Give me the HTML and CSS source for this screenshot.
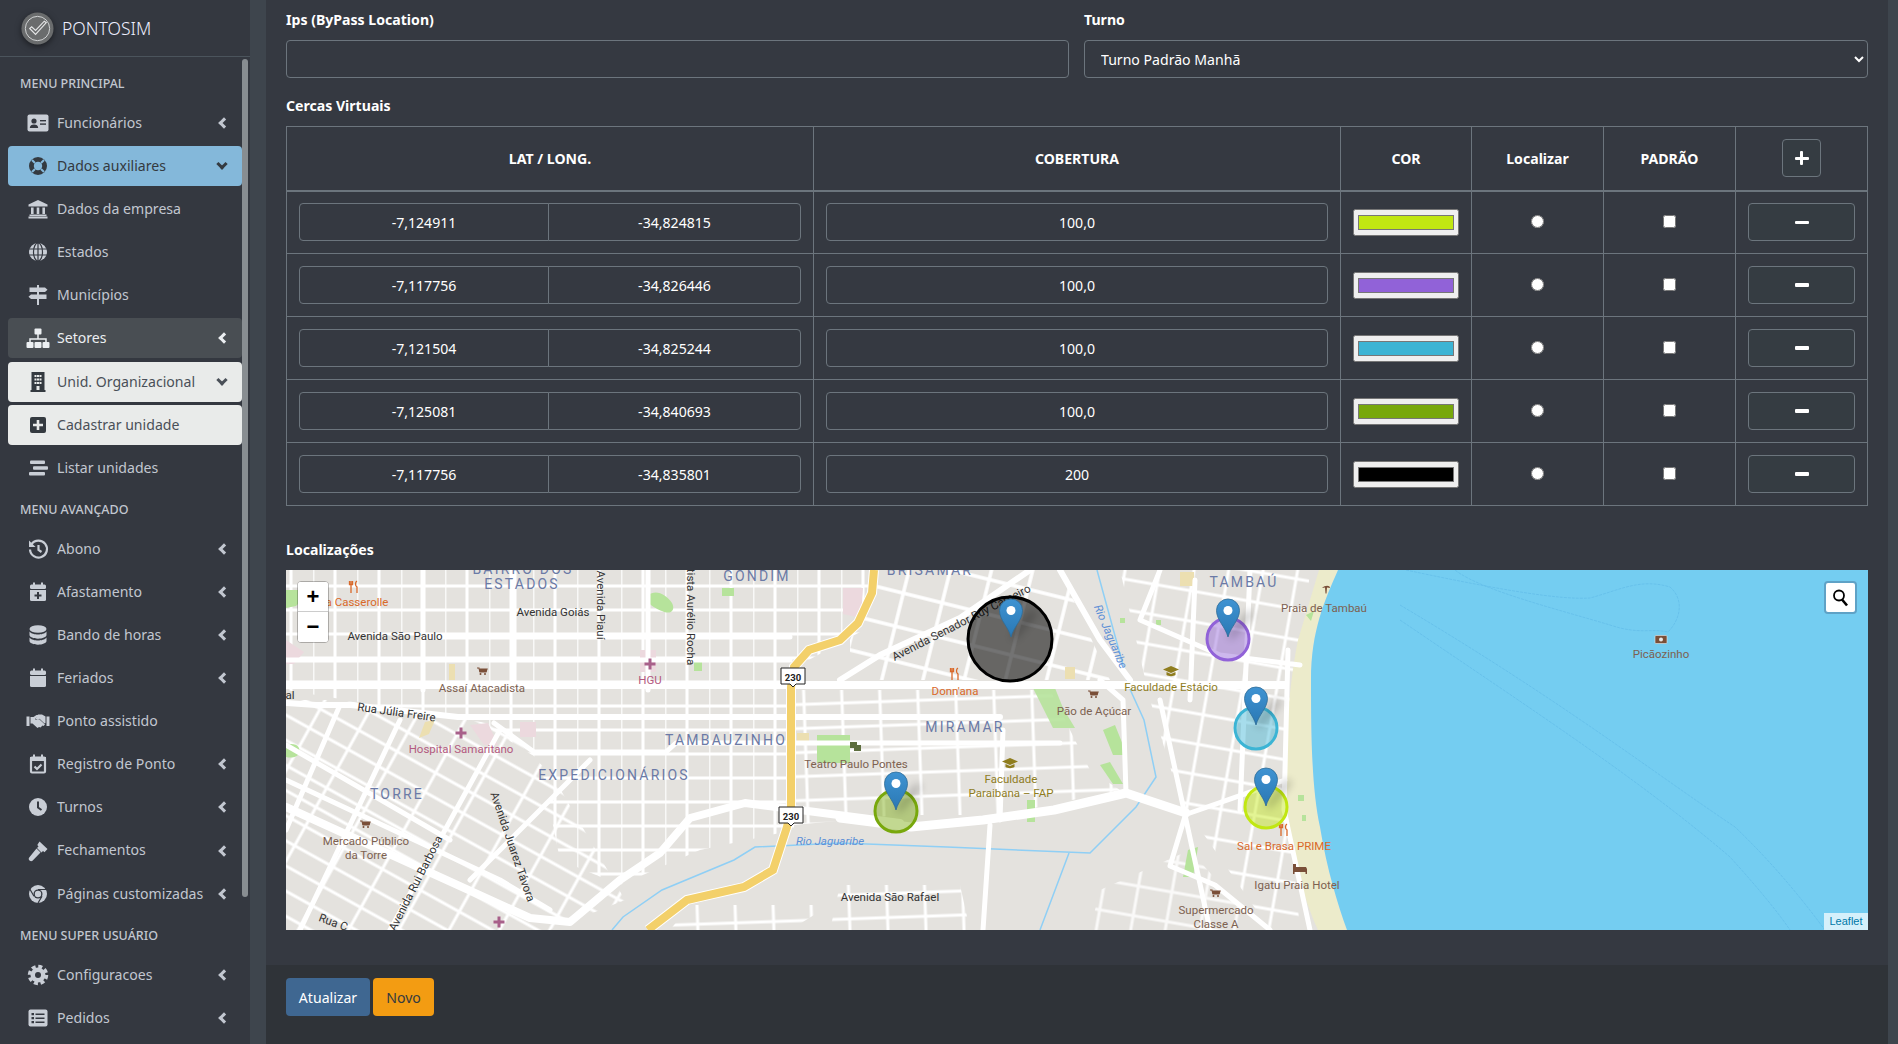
FILE: index.html
```html
<!DOCTYPE html>
<html lang="pt-BR">
<head>
  <meta charset="UTF-8">
  <meta name="viewport" content="width=device-width, initial-scale=1.0">
  <title>PontoSim</title>
  <link rel="stylesheet" href="styles.css">
</head>
<body>
<!-- icon sprite -->
<svg class="sprite" xmlns="http://www.w3.org/2000/svg">
  <symbol id="i-card" viewBox="0 0 24 24"><rect x="1.5" y="3.5" width="21" height="17" rx="2"/><circle class="cut" cx="8" cy="10" r="2.6"/><path class="cut" d="M3.8 17c0-2.5 2-3.6 4.2-3.6s4.2 1.1 4.2 3.6z"/><rect class="cut" x="14" y="9" width="6" height="1.4"/><rect class="cut" x="14" y="12.4" width="6" height="1.4"/></symbol>
  <symbol id="i-ring" viewBox="0 0 24 24"><circle cx="12" cy="12" r="9"/><circle class="cut" cx="12" cy="12" r="4.2"/><path class="cutline" d="M6 6l3 3M18 6l-3 3M6 18l3-3M18 18l-3-3"/></symbol>
  <symbol id="i-bank" viewBox="0 0 24 24"><path d="M12 3l9.500 4.500V9.500H2.500V7.500z"/><rect x="5" y="10.500" width="2.600" height="6.500"/><rect x="10.700" y="10.500" width="2.600" height="6.500"/><rect x="16.400" y="10.500" width="2.600" height="6.500"/><rect x="3.500" y="17.500" width="17" height="1.600"/><rect x="2.500" y="19.500" width="19" height="2"/></symbol>
  <symbol id="i-globe" viewBox="0 0 24 24"><circle cx="12" cy="12" r="9"/><path class="cutline thin" d="M3 9h18M3 15h18M12 3v18"/><ellipse class="cutline thin" cx="12" cy="12" rx="4.500" ry="9"/></symbol>
  <symbol id="i-post" viewBox="0 0 24 24"><rect x="11" y="2" width="2" height="20"/><path d="M3.500 4.500H19l2.500 2.300L19 9H3.500z"/><path d="M20.500 11.500H5L2.500 13.800 5 16h15.500z"/></symbol>
  <symbol id="i-sitemap" viewBox="0 0 24 24"><rect x="8.500" y="2.500" width="7" height="6" rx="1"/><path class="line" d="M12 8v5M4 16v-3h16v3"/><rect x="0.500" y="16" width="7" height="6" rx="1"/><rect x="8.500" y="16" width="7" height="6" rx="1"/><rect x="16.500" y="16" width="7" height="6" rx="1"/></symbol>
  <symbol id="i-building" viewBox="0 0 24 24"><rect x="5.500" y="2" width="13" height="18.500"/><rect x="4.500" y="20" width="15" height="2"/><path class="cut" d="M8.500 5h2v2h-2zM11 5h2v2h-2zM13.500 5h2v2h-2zM8.500 8.500h2v2h-2zM11 8.500h2v2h-2zM13.500 8.500h2v2h-2zM8.500 12h2v2h-2zM11 12h2v2h-2zM13.500 12h2v2h-2zM10.500 16h3v4h-3z"/></symbol>
  <symbol id="i-plus" viewBox="0 0 24 24"><rect x="4" y="4" width="16" height="16" rx="2"/><path class="cut" d="M10.700 7h2.600v3.700H17v2.600h-3.700V17h-2.600v-3.700H7v-2.600h3.700z"/></symbol>
  <symbol id="i-stream" viewBox="0 0 24 24"><rect x="4" y="4.500" width="15" height="3.500" rx="1"/><rect x="7" y="10.200" width="15" height="3.500" rx="1"/><rect x="3" y="16" width="16" height="3.500" rx="1"/></symbol>
  <symbol id="i-history" viewBox="0 0 24 24"><path class="line wide" d="M5.500 7.200A8.500 8.500 0 1 1 4 12.500"/><path d="M3 3.500l6.500 6.500H3z"/><path class="line wide" d="M12.500 8v5l3 2"/></symbol>
  <symbol id="i-calplus" viewBox="0 0 24 24"><rect x="7" y="2.500" width="2" height="4"/><rect x="15" y="2.500" width="2" height="4"/><rect x="4" y="4.500" width="16" height="4.500" rx="1.500"/><path d="M4 10h16v9.500a1.500 1.500 0 0 1-1.500 1.500h-13A1.500 1.500 0 0 1 4 19.500z"/><path class="cut" d="M11 12h2v2.500h2.500v2H13V19h-2v-2.500H8.500v-2H11z"/></symbol>
  <symbol id="i-db" viewBox="0 0 24 24"><ellipse cx="12" cy="6" rx="8.500" ry="3.800"/><path d="M3.500 8.500C5 10.800 9 11.500 12 11.500s7-.7 8.500-3V12c0 2-4 3.700-8.500 3.700S3.500 14 3.500 12z"/><path d="M3.500 14.500C5 16.800 9 17.500 12 17.500s7-.7 8.500-3V18c0 2-4 3.700-8.500 3.700S3.500 20 3.500 18z"/></symbol>
  <symbol id="i-cal" viewBox="0 0 24 24"><rect x="7" y="2.500" width="2" height="4"/><rect x="15" y="2.500" width="2" height="4"/><rect x="4" y="4.500" width="16" height="4.500" rx="1.500"/><path d="M4 10h16v9.500a1.500 1.500 0 0 1-1.500 1.500h-13A1.500 1.500 0 0 1 4 19.500z"/></symbol>
  <symbol id="i-hands" viewBox="0 0 24 24"><rect x="0.500" y="7.500" width="3" height="9.500"/><rect x="20.500" y="7.500" width="3" height="9.500"/><path d="M4.500 8h3l3-2h3l-4.500 4c1 1.500 2.500 1.200 4 0l6 5.500-1.500 1.500-1-.5-2 2-1.500-.5-1.500 1-5-4.500H4.500z"/><path d="M12 5.500h4l3.500 2V14l-1 .5-5-4.800-2 1.300-2-1z"/></symbol>
  <symbol id="i-calcheck" viewBox="0 0 24 24"><rect x="7" y="2.500" width="2" height="4"/><rect x="15" y="2.500" width="2" height="4"/><rect class="line wide" x="5" y="5.500" width="14" height="15" rx="1"/><rect x="4" y="5" width="16" height="4"/><path class="line wide" d="M8.500 14.500l2.500 2.500 4.500-4.500"/></symbol>
  <symbol id="i-clock" viewBox="0 0 24 24"><circle cx="12" cy="12" r="9"/><path class="cutline" d="M12 6.500V12.500l3.500 2.500"/></symbol>
  <symbol id="i-gavel" viewBox="0 0 24 24"><path d="M13.500 2.500l8 7.500-3 3.200-1.500-1.200-1.500 1.500-4.500-4.500 1.500-1.500-1.200-1.500z"/><path d="M10.500 9.500l4 4-8 8.300c-.8.600-2 .6-3-.3s-1-2.300-.3-3z"/></symbol>
  <symbol id="i-chrome" viewBox="0 0 24 24"><circle cx="12" cy="12" r="9"/><circle class="cut" cx="12" cy="12" r="4.500"/><circle cx="12" cy="12" r="3.200"/><path class="cutline thin" d="M12 7.500h8.500M8 14.200L3.800 7M16 14.200L12 21"/></symbol>
  <symbol id="i-cog" viewBox="0 0 24 24"><circle cx="12" cy="12" r="7.500"/><circle class="line gear" cx="12" cy="12" r="8.500"/><circle class="cut" cx="12" cy="12" r="3"/></symbol>
  <symbol id="i-list" viewBox="0 0 24 24"><rect x="2.500" y="3.500" width="19" height="17" rx="2"/><path class="cut" d="M5.500 7h2.500v2.300H5.500zM5.500 11h2.500v2.300H5.500zM5.500 15h2.500v2.300H5.500zM9.500 7.400h9v1.500h-9zM9.500 11.400h9v1.500h-9zM9.500 15.400h9v1.500h-9z"/></symbol>
  <symbol id="pin" viewBox="-14 -41 48 44" overflow="visible"><path d="M0 0C-2.500-10-11.500-17-11.500-26.500A11.500 11.500 0 0 1 11.500-26.500C11.500-17 2.500-10 0 0z" fill="url(#pinFill)" stroke="#2e6c97" stroke-width=".8"/><circle cx="0" cy="-26.500" r="4.500" fill="#fff"/></symbol>
</svg>

<div class="wrapper">
  <aside class="sidebar">
    <div class="brand">
      <svg class="brand-logo" viewBox="0 0 36 36"><circle cx="18" cy="18" r="16.500" fill="#6a6c6d"/><circle cx="18" cy="18" r="12.500" fill="none" stroke="#d3d5d6" stroke-width="1"/><path d="M10 18l6 6 11-12-2-1.500-9 9.500-4-3.800z" fill="none" stroke="#e4e5e6" stroke-width="1.200"/></svg>
      <span class="brand-text">PONTOSIM</span>
    </div>
    <div class="nav-scroll">
      <nav class="nav">
        <div class="nav-header">MENU PRINCIPAL</div>
        <a class="nav-link"><svg class="nav-icon"><use href="#i-card"/></svg><span>Funcionários</span><i class="chev"></i></a>
        <a class="nav-link is-blue"><svg class="nav-icon"><use href="#i-ring"/></svg><span>Dados auxiliares</span><i class="chev down"></i></a>
        <a class="nav-link"><svg class="nav-icon"><use href="#i-bank"/></svg><span>Dados da empresa</span></a>
        <a class="nav-link"><svg class="nav-icon"><use href="#i-globe"/></svg><span>Estados</span></a>
        <a class="nav-link"><svg class="nav-icon"><use href="#i-post"/></svg><span>Municípios</span></a>
        <a class="nav-link is-hover"><svg class="nav-icon"><use href="#i-sitemap"/></svg><span>Setores</span><i class="chev"></i></a>
        <a class="nav-link is-light"><svg class="nav-icon"><use href="#i-building"/></svg><span>Unid. Organizacional</span><i class="chev down"></i></a>
        <a class="nav-link is-light"><svg class="nav-icon"><use href="#i-plus"/></svg><span>Cadastrar unidade</span></a>
        <a class="nav-link"><svg class="nav-icon"><use href="#i-stream"/></svg><span>Listar unidades</span></a>
        <div class="nav-header">MENU AVANÇADO</div>
        <a class="nav-link"><svg class="nav-icon"><use href="#i-history"/></svg><span>Abono</span><i class="chev"></i></a>
        <a class="nav-link"><svg class="nav-icon"><use href="#i-calplus"/></svg><span>Afastamento</span><i class="chev"></i></a>
        <a class="nav-link"><svg class="nav-icon"><use href="#i-db"/></svg><span>Bando de horas</span><i class="chev"></i></a>
        <a class="nav-link"><svg class="nav-icon"><use href="#i-cal"/></svg><span>Feriados</span><i class="chev"></i></a>
        <a class="nav-link"><svg class="nav-icon"><use href="#i-hands"/></svg><span>Ponto assistido</span></a>
        <a class="nav-link"><svg class="nav-icon"><use href="#i-calcheck"/></svg><span>Registro de Ponto</span><i class="chev"></i></a>
        <a class="nav-link"><svg class="nav-icon"><use href="#i-clock"/></svg><span>Turnos</span><i class="chev"></i></a>
        <a class="nav-link"><svg class="nav-icon"><use href="#i-gavel"/></svg><span>Fechamentos</span><i class="chev"></i></a>
        <a class="nav-link"><svg class="nav-icon"><use href="#i-chrome"/></svg><span>Páginas customizadas</span><i class="chev"></i></a>
        <div class="nav-header">MENU SUPER USUÁRIO</div>
        <a class="nav-link"><svg class="nav-icon"><use href="#i-cog"/></svg><span>Configuracoes</span><i class="chev"></i></a>
        <a class="nav-link"><svg class="nav-icon"><use href="#i-list"/></svg><span>Pedidos</span><i class="chev"></i></a>
      </nav>
      <div class="scroll-thumb"></div>
    </div>
  </aside>

  <main class="content">
    <form class="form-body">
      <div class="form-row">
        <div class="form-group">
          <label for="ips">Ips (ByPass Location)</label>
          <input class="form-control" type="text" id="ips">
        </div>
        <div class="form-group">
          <label for="turno">Turno</label>
          <select class="form-control" id="turno"><option>Turno Padrão Manhã</option></select>
        </div>
      </div>

      <label class="section-label">Cercas Virtuais</label>
      <table class="fence-table">
        <colgroup><col class="c-lat"><col class="c-cov"><col class="c-cor"><col class="c-loc"><col class="c-pad"><col class="c-act"></colgroup>
        <thead>
          <tr>
            <th>LAT / LONG.</th><th>COBERTURA</th><th>COR</th><th>Localizar</th><th>PADRÃO</th>
            <th><button type="button" class="icon-btn add"><span class="glyph-plus"></span></button></th>
          </tr>
        </thead>
        <tbody>
          <tr>
            <td><div class="latlong"><input class="form-control" value="-7,124911"><input class="form-control" value="-34,824815"></div></td>
            <td><input class="form-control" value="100,0"></td>
            <td><input class="swatch" type="color" value="#c1e712"></td>
            <td><input type="radio" name="loc"></td>
            <td><input type="checkbox"></td>
            <td><button type="button" class="icon-btn"><span class="glyph-minus"></span></button></td>
          </tr>
          <tr>
            <td><div class="latlong"><input class="form-control" value="-7,117756"><input class="form-control" value="-34,826446"></div></td>
            <td><input class="form-control" value="100,0"></td>
            <td><input class="swatch" type="color" value="#9162d8"></td>
            <td><input type="radio" name="loc"></td>
            <td><input type="checkbox"></td>
            <td><button type="button" class="icon-btn"><span class="glyph-minus"></span></button></td>
          </tr>
          <tr>
            <td><div class="latlong"><input class="form-control" value="-7,121504"><input class="form-control" value="-34,825244"></div></td>
            <td><input class="form-control" value="100,0"></td>
            <td><input class="swatch" type="color" value="#3cb4d4"></td>
            <td><input type="radio" name="loc"></td>
            <td><input type="checkbox"></td>
            <td><button type="button" class="icon-btn"><span class="glyph-minus"></span></button></td>
          </tr>
          <tr>
            <td><div class="latlong"><input class="form-control" value="-7,125081"><input class="form-control" value="-34,840693"></div></td>
            <td><input class="form-control" value="100,0"></td>
            <td><input class="swatch" type="color" value="#78a80c"></td>
            <td><input type="radio" name="loc"></td>
            <td><input type="checkbox"></td>
            <td><button type="button" class="icon-btn"><span class="glyph-minus"></span></button></td>
          </tr>
          <tr>
            <td><div class="latlong"><input class="form-control" value="-7,117756"><input class="form-control" value="-34,835801"></div></td>
            <td><input class="form-control" value="200"></td>
            <td><input class="swatch" type="color" value="#000000"></td>
            <td><input type="radio" name="loc"></td>
            <td><input type="checkbox"></td>
            <td><button type="button" class="icon-btn"><span class="glyph-minus"></span></button></td>
          </tr>
        </tbody>
      </table>

      <label class="section-label map-label">Localizações</label>
      <div class="map">
        <!-- the drawing uses page coordinates, hence the viewBox origin -->
        <svg class="map-canvas" viewBox="286 570 1582 360" xmlns="http://www.w3.org/2000/svg">
          <defs>
            <linearGradient id="pinFill" x1="0" y1="0" x2="0" y2="1"><stop offset="0" stop-color="#3f93d2"/><stop offset="1" stop-color="#2a78b4"/></linearGradient>
            <filter id="soft" x="-50%" y="-50%" width="200%" height="200%"><feGaussianBlur stdDeviation="4"/></filter>
            <pattern id="gridNorth" width="44" height="24" patternUnits="userSpaceOnUse" x="401" y="574"><path d="M0 12H44M22 0V24" stroke="#fff" stroke-width="3" fill="none"/><path d="M0 0V24" stroke="#fff" stroke-width="3" fill="none" opacity=".75"/></pattern>
            <pattern id="gridSouthWest" width="44" height="22" patternUnits="userSpaceOnUse" patternTransform="rotate(29 400 800)"><path d="M0 11H44M22 0V22" stroke="#fff" stroke-width="3" fill="none"/></pattern>
            <pattern id="gridCentre" width="38" height="24" patternUnits="userSpaceOnUse" patternTransform="rotate(-2)"><path d="M0 12H38M19 0V24" stroke="#fff" stroke-width="3" fill="none"/></pattern>
            <pattern id="gridEast" width="34" height="30" patternUnits="userSpaceOnUse" patternTransform="rotate(10)"><path d="M0 15H34M17 0V30" stroke="#fff" stroke-width="3" fill="none"/></pattern>
            <pattern id="gridNorthCentre" width="40" height="34" patternUnits="userSpaceOnUse" patternTransform="rotate(14)"><path d="M0 17H40M20 0V34" stroke="#fff" stroke-width="3.500" fill="none"/></pattern>
            <g id="cart"><path d="M-5-4h2l1 4h6l1-3H-2" fill="none" stroke="#7a4f38" stroke-width="1.200"/><rect x="-2.500" y="-3" width="7" height="3" fill="#7a4f38"/><circle cx="-1.500" cy="2" r="1" fill="#7a4f38"/><circle cx="3" cy="2" r="1" fill="#7a4f38"/></g>
            <path id="cross" d="M-1.500-5.500h3v4h4v3h-4v4h-3v-4h-4v-3h4z" fill="#a8608a"/>
            <g id="fork"><path d="M-3-6v5M-4.500-6v3.500h3V-6M-3-1v7M3-6c-2 1-2 5 0 6v6" fill="none" stroke="#d9692a" stroke-width="1.300"/></g>
            <g id="cap"><path d="M0-5l8 3.500L0 2-8-1.500z" fill="#8f7d1e"/><path d="M-4.500 1v3c2 1.500 7 1.500 9 0V1L0 3z" fill="#8f7d1e"/></g>
          </defs>

          <rect x="286" y="570" width="1582" height="360" fill="#e4e2de"/>

          <!-- block grids -->
          <path d="M286 570H875L860 632 794 668V830L700 850 620 885 560 860 540 760 480 722 286 690z" fill="url(#gridNorth)"/>
          <path d="M286 700L340 700 500 725 552 775 625 900 550 930H286z" fill="url(#gridSouthWest)"/>
          <path d="M794 690H1050L1090 770 1120 790 1000 815 900 815 794 825z" fill="url(#gridCentre)"/>
          <path d="M880 570H1060L1110 680H850L850 640z" fill="url(#gridNorthCentre)"/>
          <path d="M1120 570H1310L1288 800 1300 930H1270L1180 800 1150 700z" fill="url(#gridEast)"/>
          <path d="M1100 890L1190 850 1260 930H1090z" fill="url(#gridEast)" opacity=".8"/>
          <path d="M840 885H960L970 930H830z" fill="url(#gridCentre)"/>
          <path d="M690 905H830L790 930H670z" fill="url(#gridCentre)"/>

          <!-- sea and beach -->
          <path d="M1319 570H1338C1325 600 1311 630 1311 680 1311 740 1312 790 1320 827 1327 870 1338 905 1347 930H1318C1300 890 1288 840 1286 790 1285 730 1290 680 1298 640z" fill="#ecebcb"/>
          <path d="M1338 570H1868V930H1347C1338 905 1327 870 1320 827 1312 790 1311 740 1311 680 1311 630 1325 600 1338 570z" fill="#74cdf1"/>
          <path d="M1406 570C1500 590 1560 600 1590 598 1620 590 1640 578 1670 587 1685 600 1680 620 1668 632 1650 628 1640 635 1610 625 1560 610 1480 590 1455 570M1400 605C1560 700 1650 770 1735 827 1780 870 1810 910 1825 930M1400 620C1540 715 1640 780 1730 857 1760 890 1780 915 1790 930" fill="none" stroke="#62bce8" stroke-width=".7" stroke-dasharray="3 1"/>

          <!-- parks and lots -->
          <g fill="#b6e39b">
            <path d="M648 595c8-6 18-1 24 8 4 8-2 12-10 8-8-3-19-10-14-16z"/><rect x="722" y="588" width="12" height="8"/><rect x="694" y="660" width="8" height="11"/>
            <path d="M286 590v18l10-2 8-8-6-8z"/><path d="M286 745c10-3 15 2 13 8-2 5-8 5-13 4z"/><rect x="817" y="735" width="33" height="28"/>
            <path d="M1033 688l20-5 10 25 12 20-22 0z" opacity=".9"/><path d="M1103 730l12-5 12 30-14 0z"/><path d="M1100 765l10-3 13 22-10 0z"/><path d="M1027 800h8v22h-8z"/><path d="M1188 850l10-3-5 30-10 0z"/>
            <rect x="1120" y="618" width="5" height="5"/><rect x="1156" y="620" width="5" height="5"/><path d="M1306 615l8-4-3 10z"/><rect x="1298" y="795" width="6" height="6"/><rect x="1302" y="815" width="4" height="6"/>
          </g>
          <g fill="#ecd9de"><rect x="520" y="722" width="16" height="15"/><rect x="640" y="650" width="16" height="22"/><path d="M286 640l18 12-10 12-8 0z"/><path d="M470 725l18-2 10 22-14 0z"/><path d="M843 588h20l-2 30-18-4z"/></g>
          <g fill="#ecdfb1"><rect x="449" y="664" width="6" height="16"/><path d="M425 722l10-2-6 14-10 4z"/><rect x="797" y="733" width="12" height="10"/><rect x="1065" y="667" width="10" height="12"/><rect x="1180" y="572" width="14" height="14"/></g>

          <!-- river -->
          <path d="M612 930L623 917 662 890 734 860 755 847 840 843 947 847 1090 853 1136 807 1156 777 1144 720 1129 687 1097 570M1069 853L1040 930" fill="none" stroke="#8fcff5" stroke-width="1.500"/>

          <!-- main avenues -->
          <g fill="none" stroke="#fff" stroke-linejoin="round" stroke-linecap="round">
            <path stroke-width="8" d="M286 685H1285"/>
            <path stroke-width="6" d="M287 703L316 705 351 705 458 717H1000"/>
            <path stroke-width="5" d="M494 723L534 752 666 752 676 743H1060"/>
            <path stroke-width="5" d="M286 660H790M423 637H790M423 570V690M514 570V690M648 570V690"/>
            <path stroke-width="8" d="M286 807L530 918 570 922 620 880 660 853 690 818 745 803 800 810 900 823"/>
            <path stroke-width="9" d="M840 818L911 827 983 820 1054 810 1126 793 1186 813"/>
            <path stroke-width="5" d="M1186 813L1170 866 1215 885 1270 930M1126 793L1123 700 1100 680"/>
            <path stroke-width="6" d="M840 680L880 655 960 618 1030 570M1060 570L1100 640 1130 680"/>
            <path stroke-width="5" d="M1160 570L1140 620 1220 655 1300 665M1288 650L1284 810 1310 930M1190 813L1285 780"/>
            <path stroke-width="5" d="M286 780L500 880 550 910M286 745L450 840M340 705L286 830M400 720L300 930M500 730L390 930M590 760L470 880"/>
            <path stroke-width="5" d="M1250 570L1240 810M1195 580L1190 700M1160 700L1210 930M990 825L983 930M1003 730L1000 820"/>
          </g>

          <!-- highway 230 -->
          <path d="M874 570L872 593 858 623 840 640 809 650 794 667 791 687V807L787 827 773 870 744 887 687 900 648 930" fill="none" stroke="#fff" stroke-width="10"/>
          <path d="M874 570L872 593 858 623 840 640 809 650 794 667 791 687V807L787 827 773 870 744 887 687 900 648 930" fill="none" stroke="#f3d06a" stroke-width="8"/>
          <g class="shield" transform="translate(793 677)"><path d="M-12-9H12V7H3L0 10-3 7H-12z"/><text y="3.500">230</text></g>
          <g class="shield" transform="translate(791 816)"><path d="M-12-9H12V7H3L0 10-3 7H-12z"/><text y="3.500">230</text></g>

          <!-- district names -->
          <g class="m-area">
            <text x="523" y="574">BAIRRO DOS</text><text x="522" y="589">ESTADOS</text><text x="757" y="581">GONDIM</text>
            <text x="930" y="575">BRISAMAR</text><text x="1244" y="587">TAMBAÚ</text><text x="726" y="745">TAMBAUZINHO</text>
            <text x="614" y="780">EXPEDICIONÁRIOS</text><text x="397" y="799">TORRE</text><text x="965" y="732">MIRAMAR</text>
          </g>
          <!-- street names -->
          <g class="m-street">
            <text x="553" y="616">Avenida Goiás</text><text x="395" y="640">Avenida São Paulo</text>
            <text transform="translate(396 716) rotate(8)">Rua Júlia Freire</text><text x="290" y="699">al</text>
            <text transform="translate(597 605) rotate(90)">Avenida Piauí</text><text transform="translate(687 617) rotate(90)">tista Aurélio Rocha</text>
            <text transform="translate(509 848) rotate(71)">Avenida Juarez Távora</text><text transform="translate(419 885) rotate(-63)">Avenida Rui Barbosa</text>
            <text transform="translate(332 926) rotate(20)">Rua C</text><text transform="translate(963 626) rotate(-27)">Avenida Senador Ruy Carneiro</text>
            <text x="890" y="901">Avenida São Rafael</text>
          </g>
          <g class="m-water">
            <text x="830" y="845">Rio Jaguaribe</text><text transform="translate(1107 638) rotate(67)">Rio Jaguaribe</text>
          </g>
          <!-- places -->
          <g class="m-shop">
            <text x="482" y="692">Assaí Atacadista</text><text x="366" y="845">Mercado Público</text><text x="366" y="859">da Torre</text>
            <text x="856" y="768">Teatro Paulo Pontes</text><text x="1094" y="715">Pão de Açúcar</text><text x="1324" y="612">Praia de Tambaú</text>
            <text x="1297" y="889">Igatu Praia Hotel</text><text x="1216" y="914">Supermercado</text><text x="1216" y="928">Classe A</text><text x="1661" y="658">Picãozinho</text>
          </g>
          <g class="m-food">
            <text x="357" y="606">a Casserolle</text><text x="955" y="695">Donn'ana</text><text x="1284" y="850">Sal e Brasa PRIME</text>
          </g>
          <g class="m-school"><text x="1171" y="691">Faculdade Estácio</text><text x="1011" y="783">Faculdade</text><text x="1011" y="797">Paraibana – FAP</text></g>
          <g class="m-health"><text x="461" y="753">Hospital Samaritano</text><text x="650" y="684">HGU</text></g>

          <use href="#cart" x="482" y="672"/><use href="#cart" x="365" y="825"/><use href="#cart" x="1093" y="695"/><use href="#cart" x="1215" y="894"/>
          <use href="#cross" x="461" y="733"/><use href="#cross" x="650" y="664"/><use href="#cross" x="499" y="922"/>
          <use href="#fork" x="354" y="587"/><use href="#fork" x="955" y="674"/><use href="#fork" x="1284" y="830"/>
          <use href="#cap" x="1171" y="671"/><use href="#cap" x="1010" y="763"/>
          <path d="M1293 864h3v3h10l1 2v5h-1.500v-2h-11v2H1293z" fill="#7a4f38"/>
          <path d="M1322 588c3-3 8-3 8 0l-3-.5-.5 6h-1l-.5-6z" fill="#7a4f38"/>
          <g transform="translate(1661 639)"><rect x="-6" y="-3.500" width="12" height="8" rx="1" fill="#7a4f38" stroke="#e8e8e8" stroke-width=".6"/><circle r="2" cy=".5" fill="#e8e8e8"/></g>
          <g transform="translate(855 747)"><rect x="-5" y="-5" width="7" height="6" fill="#5d6e3f"/><rect x="-1" y="-2" width="7" height="6" fill="#5d6e3f"/></g>

          <!-- fence circles -->
          <circle cx="1010" cy="639" r="42" fill="#000" fill-opacity=".55" stroke="#000" stroke-width="3"/>
          <circle cx="1228" cy="639" r="21" fill="#9162d8" fill-opacity=".45" stroke="#9162d8" stroke-width="3"/>
          <circle cx="1256" cy="728" r="21" fill="#3cb4d4" fill-opacity=".45" stroke="#3cb4d4" stroke-width="3"/>
          <circle cx="1266" cy="807" r="21" fill="#c1e712" fill-opacity=".45" stroke="#c1e712" stroke-width="3"/>
          <circle cx="896" cy="811" r="21" fill="#78a80c" fill-opacity=".45" stroke="#78a80c" stroke-width="3"/>

          <!-- marker shadows, then pins -->
          <g fill="#000" opacity=".28" filter="url(#soft)">
            <path d="M1011 637l20-26 6 2-22 26z"/><path d="M1228 637l20-26 6 2-22 26z"/><path d="M1256 725l20-26 6 2-22 26z"/><path d="M1266 806l20-26 6 2-22 26z"/><path d="M896 810l20-26 6 2-22 26z"/>
          </g>
          <use href="#pin" x="1011" y="637" width="48" height="44" transform="translate(-14 -41)"/>
          <use href="#pin" x="1228" y="637" width="48" height="44" transform="translate(-14 -41)"/>
          <use href="#pin" x="1256" y="725" width="48" height="44" transform="translate(-14 -41)"/>
          <use href="#pin" x="1266" y="806" width="48" height="44" transform="translate(-14 -41)"/>
          <use href="#pin" x="896" y="810" width="48" height="44" transform="translate(-14 -41)"/>
        </svg>

        <div class="zoom-ctl"><a class="zoom-in">+</a><a class="zoom-out">−</a></div>
        <a class="search-ctl"><svg viewBox="0 0 20 20" width="20" height="20"><circle cx="8" cy="7.500" r="5" fill="none" stroke="#000" stroke-width="1.800"/><path d="M11 11.500l5 6" stroke="#000" stroke-width="2.600"/></svg></a>
        <div class="attribution">Leaflet</div>
      </div>
    </form>

    <footer class="form-footer">
      <button type="button" class="btn btn-blue">Atualizar</button>
      <button type="button" class="btn btn-orange">Novo</button>
    </footer>
  </main>
</div>
</body>
</html>
```

FILE: styles.css
```css
* {
  box-sizing: border-box;
}
html, body {
  height: 100%;
  margin: 0;
}
body {
  font-family: "Noto Sans", "Open Sans", Arial, sans-serif;
  font-size: 14.100px;
  background: #3e454d;
  color: #fff;
  overflow: hidden;
}
.sprite {
  position: absolute;
  width: 0;
  height: 0;
}
.wrapper {
  display: flex;
  height: 1044px;
}

/* Sidebar */
.sidebar {
  width: 250px;
  flex: none;
  background: #343840;
  overflow: hidden;
}
.brand {
  height: 57px;
  display: flex;
  align-items: center;
  padding-left: 20px;
  border-bottom: 1px solid #4b545c;
}
.brand-logo {
  width: 35px;
  height: 35px;
  margin-right: 7px;
  filter: drop-shadow(0 2px 3px rgba(0, 0, 0, .5));
}
.brand-text {
  font-size: 17.500px;
  font-weight: 300;
  color: #eef;
}
.nav-scroll {
  position: relative;
  padding: 8px 8px 0;
}
.scroll-thumb {
  position: absolute;
  top: 2px;
  right: 2px;
  width: 6px;
  height: 838px;
  border-radius: 3px;
  background: #888d91;
}
.nav {
  width: 234px;
}
.nav-header {
  height: 38px;
  padding: 10px 12px 0;
  font-size: 12.500px;
  font-weight: 500;
  line-height: 18px;
  color: #c2c7d0;
}
.nav-link {
  --cut: #343840;
  --ic: #c9ced6;
  height: 40px;
  margin-bottom: 3.100px;
  display: flex;
  align-items: center;
  padding-left: 18px;
  border-radius: 4px;
  color: #c2c7d0;
  fill: var(--ic);
}
.nav-link span {
  margin-left: 7px;
  flex: 1;
  line-height: 1;
}
.nav-icon {
  width: 24px;
  height: 24px;
  flex: none;
}
.is-blue {
  --cut: #84b8da;
  --ic: #343a40;
  background: #84b8da;
  color: #343a40;
}
.is-hover {
  --cut: #494e53;
  --ic: #eceff2;
  background: #494e53;
  color: #eceff2;
}
.is-light {
  --cut: #e9ebea;
  --ic: #343a40;
  background: #e9ebea;
  color: #4a5058;
}
.cut {
  fill: var(--cut);
}
.cutline {
  fill: none;
  stroke: var(--cut);
  stroke-width: 2;
}
.cutline.thin {
  stroke-width: 1.200;
}
.line {
  fill: none;
  stroke: var(--ic);
  stroke-width: 1.500;
}
.line.wide {
  stroke-width: 2.200;
}
.line.gear {
  stroke-width: 3.500;
  stroke-dasharray: 4 2.680;
}
.chev {
  width: 8px;
  height: 8px;
  margin-right: 14px;
  border-left: 3px solid;
  border-bottom: 3px solid;
  transform: rotate(45deg);
}
.chev.down {
  margin-right: 16px;
  transform: translateY(-2px) rotate(-45deg);
}

/* Content */
.content {
  width: 1622px;
  margin-left: 16px;
  background: #353941;
  display: flex;
  flex-direction: column;
}
.form-body {
  flex: 1;
  padding: 0 20px;
}
label {
  display: block;
  font-weight: 700;
  font-size: 14.100px;
  line-height: 20px;
}
.form-row {
  display: grid;
  grid-template-columns: 783px 784px;
  gap: 15px;
  padding-top: 10px;
}
.form-group label {
  margin-bottom: 10px;
}
.form-control {
  display: block;
  width: 100%;
  height: 38px;
  padding: 0 12px;
  background: #353941;
  border: 1px solid #6c757d;
  border-radius: 4px;
  color: #fff;
  font: inherit;
}
.section-label {
  margin-top: 18px;
  margin-bottom: 10px;
}
.map-label {
  margin-top: 34px;
  margin-bottom: 10px;
}

/* Table */
.fence-table {
  width: 1581px;
  table-layout: fixed;
  border-collapse: collapse;
}
.c-lat, .c-cov {
  width: 527px;
}
.c-cor {
  width: 131px;
}
.c-loc, .c-pad {
  width: 132px;
}
.c-act {
  width: 132px;
}
.fence-table th, .fence-table td {
  border: 1px solid #6c757d;
  text-align: center;
  vertical-align: middle;
  padding: 0 12px;
  height: 63px;
}
.fence-table th {
  font-size: 14.100px;
  border-bottom-width: 2px;
  height: 64px;
}
.fence-table input[type="radio"], .fence-table input[type="checkbox"] {
  display: block;
  margin: -1px auto 0;
}
.fence-table .form-control {
  text-align: center;
}
.latlong {
  display: flex;
}
.latlong .form-control:first-child {
  flex: 0 0 250px;
  border-radius: 4px 0 0 4px;
}
.latlong .form-control:last-child {
  flex: 1;
  min-width: 0;
  border-radius: 0 4px 4px 0;
  margin-left: -1px;
}
.swatch {
  display: block;
  width: 106px;
  height: 27px;
  margin: 0 auto;
}
.icon-btn {
  width: 100%;
  height: 38px;
  display: flex;
  align-items: center;
  justify-content: center;
  background: #353c42;
  border: 1px solid #6c757d;
  border-radius: 4px;
}
.icon-btn.add {
  width: 39px;
  margin: 0 auto;
}
.glyph-minus, .glyph-plus {
  position: relative;
  display: block;
  width: 14px;
  height: 3.500px;
  border-radius: 1px;
  background: #fff;
}
.glyph-plus::after {
  content: "";
  position: absolute;
  left: 5.250px;
  top: -5.250px;
  width: 3.500px;
  height: 14px;
  border-radius: 1px;
  background: #fff;
}

/* Map */
.map {
  position: relative;
  width: 1582px;
  height: 360px;
  overflow: hidden;
  background: #e4e2de;
}
.map-canvas {
  display: block;
  width: 1582px;
  height: 360px;
}
.map-canvas text {
  font-family: "Roboto", "Liberation Sans", sans-serif;
  font-size: 11.500px;
}
.map-canvas .m-area text {
  fill: #6b7aa6;
  font-size: 14px;
  letter-spacing: 2.200px;
  text-anchor: middle;
}
.m-street text {
  fill: #333;
  text-anchor: middle;
}
.m-water text {
  fill: #5c8fd6;
  font-style: italic;
  text-anchor: middle;
}
.m-shop text {
  fill: #7d6150;
  text-anchor: middle;
}
.m-food text {
  fill: #d9692a;
  text-anchor: middle;
}
.m-school text {
  fill: #8f7d1e;
  text-anchor: middle;
}
.m-health text {
  fill: #b35a80;
  text-anchor: middle;
}
.shield path {
  fill: #fff;
  stroke: #222;
  stroke-width: 1;
}
.map-canvas .shield text {
  fill: #222;
  font-size: 9.500px;
  font-weight: 700;
  text-anchor: middle;
}
.zoom-ctl {
  position: absolute;
  top: 11px;
  left: 11px;
  width: 32px;
  border: 1px solid rgba(0, 0, 0, .25);
  border-radius: 4px;
}
.zoom-ctl a {
  display: block;
  height: 30px;
  background: #fff;
  color: #000;
  font: 700 22px/29px "Liberation Sans", sans-serif;
  text-align: center;
}
.zoom-in {
  border-bottom: 1px solid #ccc;
  border-radius: 2px 2px 0 0;
}
.zoom-out {
  border-radius: 0 0 2px 2px;
}
.search-ctl {
  position: absolute;
  top: 11px;
  right: 11px;
  width: 33px;
  height: 33px;
  display: flex;
  align-items: center;
  justify-content: center;
  background: #fff;
  border: 2px solid #5fa2c6;
  border-radius: 4px;
}
.attribution {
  position: absolute;
  right: 0;
  bottom: 0;
  width: 44px;
  height: 17px;
  background: rgba(255, 255, 255, .7);
  color: #0078a8;
  font: 11px/17px "Liberation Sans", sans-serif;
  text-align: center;
}

/* Footer */
.form-footer {
  height: 79px;
  flex: none;
  display: flex;
  gap: 3px;
  padding: 13px 20px 0;
  background: #2f3338;
}
.btn {
  height: 38px;
  padding: 0 10px;
  border: 1px solid transparent;
  border-radius: 4px;
  font: inherit;
}
.btn-blue {
  width: 84px;
  background: #3f6791;
  color: #fff;
}
.btn-orange {
  width: 61px;
  background: #f39c12;
  color: #343a40;
}
```
